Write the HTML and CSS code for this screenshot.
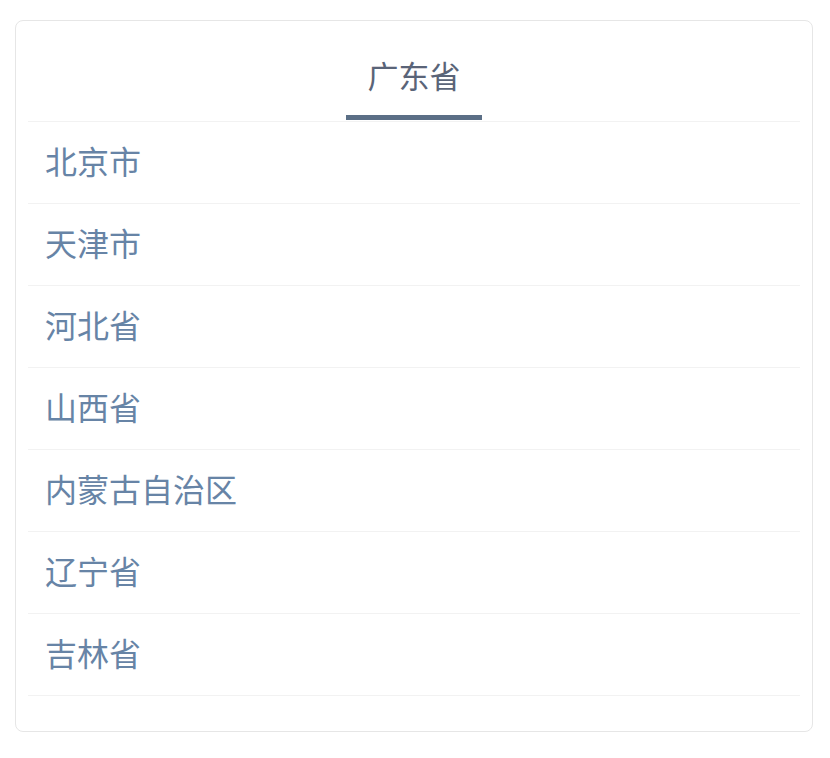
FILE: index.html
```html
<!DOCTYPE html>
<html lang="zh-CN">
<head>
    <meta charset="UTF-8">
    <meta name="viewport" content="width=device-width, initial-scale=1.0">
    <title>省份选择</title>
    <link rel="stylesheet" href="styles.css">
</head>
<body>

    <div class="card">
        <div class="tabs">
            <div class="tab active">广东省</div>
        </div>

        <ul class="list">
            <li class="item">北京市</li>
            <li class="item">天津市</li>
            <li class="item">河北省</li>
            <li class="item">山西省</li>
            <li class="item">内蒙古自治区</li>
            <li class="item">辽宁省</li>
            <li class="item">吉林省</li>
        </ul>
    </div>

</body>
</html>
```

FILE: styles.css
```css
body {
    margin: 0;
    padding: 20px 17px 0 15px;
    background: #fff;
    font-family: "Liberation Sans", "Noto Sans CJK SC", sans-serif;
}
.card {
    border: 1px solid #e6e6e6;
    border-radius: 8px;
    padding: 0 12px 35px;
    background: #fff;
    height: 675px;
}
.tabs {
    height: 100px;
    display: flex;
    justify-content: center;
    border-bottom: 1px solid #f2f2f2;
}
.tab {
    position: relative;
    font-size: 31px;
    color: #5a6478;
    padding-top: 37px;
    line-height: 40px;
}
.tab.active::after {
    content: "";
    position: absolute;
    left: 50%;
    bottom: 1px;
    width: 136px;
    height: 5px;
    margin-left: -68px;
    background: #5b6f86;
}
.list {
    list-style: none;
    margin: 0;
    padding: 0;
}
.item {
    height: 81px;
    line-height: 83px;
    padding-left: 17px;
    font-size: 32px;
    color: #6784a6;
    border-bottom: 1px solid #f2f2f2;
}
```
